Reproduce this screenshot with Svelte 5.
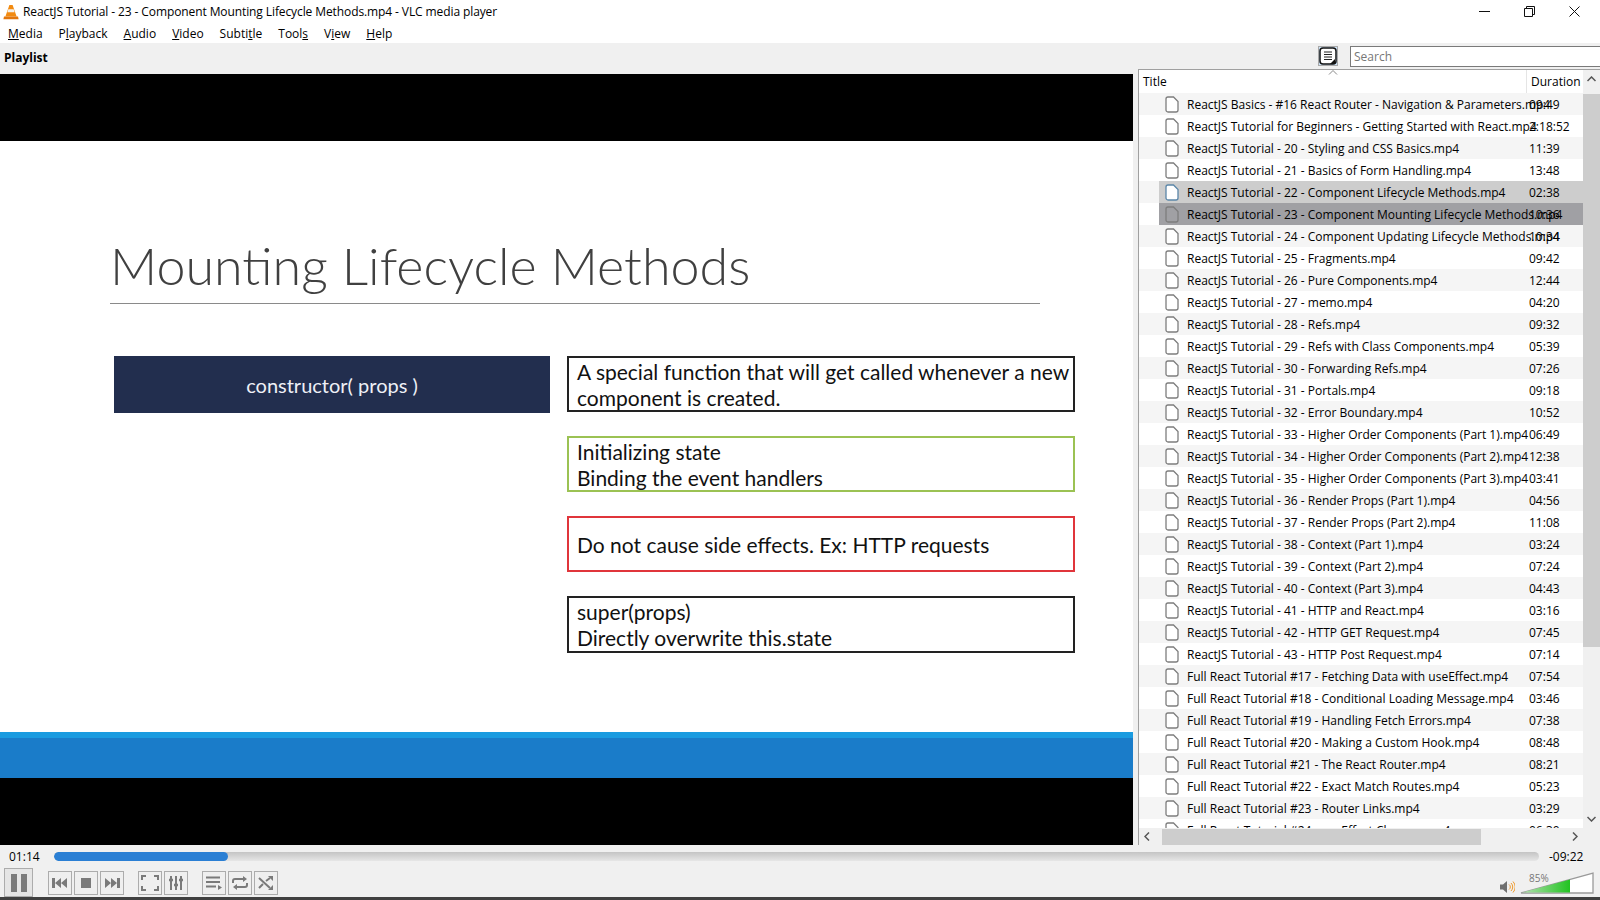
<script>
  const tracks = [
    ["ReactJS Basics - #16 React Router - Navigation & Parameters.mp4", "09:49"],
    ["ReactJS Tutorial for Beginners - Getting Started with React.mp4", "2:18:52"],
    ["ReactJS Tutorial - 20 - Styling and CSS Basics.mp4", "11:39"],
    ["ReactJS Tutorial - 21 - Basics of Form Handling.mp4", "13:48"],
    ["ReactJS Tutorial - 22 - Component Lifecycle Methods.mp4", "02:38"],
    ["ReactJS Tutorial - 23 - Component Mounting Lifecycle Methods.mp4", "10:36"],
    ["ReactJS Tutorial - 24 - Component Updating Lifecycle Methods.mp4", "10:34"],
    ["ReactJS Tutorial - 25 - Fragments.mp4", "09:42"],
    ["ReactJS Tutorial - 26 - Pure Components.mp4", "12:44"],
    ["ReactJS Tutorial - 27 - memo.mp4", "04:20"],
    ["ReactJS Tutorial - 28 - Refs.mp4", "09:32"],
    ["ReactJS Tutorial - 29 - Refs with Class Components.mp4", "05:39"],
    ["ReactJS Tutorial - 30 - Forwarding Refs.mp4", "07:26"],
    ["ReactJS Tutorial - 31 - Portals.mp4", "09:18"],
    ["ReactJS Tutorial - 32 - Error Boundary.mp4", "10:52"],
    ["ReactJS Tutorial - 33 - Higher Order Components (Part 1).mp4", "06:49"],
    ["ReactJS Tutorial - 34 - Higher Order Components (Part 2).mp4", "12:38"],
    ["ReactJS Tutorial - 35 - Higher Order Components (Part 3).mp4", "03:41"],
    ["ReactJS Tutorial - 36 - Render Props (Part 1).mp4", "04:56"],
    ["ReactJS Tutorial - 37 - Render Props (Part 2).mp4", "11:08"],
    ["ReactJS Tutorial - 38 - Context (Part 1).mp4", "03:24"],
    ["ReactJS Tutorial - 39 - Context (Part 2).mp4", "07:24"],
    ["ReactJS Tutorial - 40 - Context (Part 3).mp4", "04:43"],
    ["ReactJS Tutorial - 41 - HTTP and React.mp4", "03:16"],
    ["ReactJS Tutorial - 42 - HTTP GET Request.mp4", "07:45"],
    ["ReactJS Tutorial - 43 - HTTP Post Request.mp4", "07:14"],
    ["Full React Tutorial #17 - Fetching Data with useEffect.mp4", "07:54"],
    ["Full React Tutorial #18 - Conditional Loading Message.mp4", "03:46"],
    ["Full React Tutorial #19 - Handling Fetch Errors.mp4", "07:38"],
    ["Full React Tutorial #20 - Making a Custom Hook.mp4", "08:48"],
    ["Full React Tutorial #21 - The React Router.mp4", "08:21"],
    ["Full React Tutorial #22 - Exact Match Routes.mp4", "05:23"],
    ["Full React Tutorial #23 - Router Links.mp4", "03:29"],
    ["Full React Tutorial #24 - useEffect Cleanup.mp4", "06:30"]
  ];
  const menu = [
    ["", "M", "edia"], ["P", "l", "ayback"], ["", "A", "udio"], ["", "V", "ideo"],
    ["Subti", "t", "le"], ["Tool", "s", ""], ["V", "i", "ew"], ["", "H", "elp"]
  ];
</script>

<div class="window">
  <header class="titlebar">
    <svg class="cone" width="16" height="16" viewBox="0 0 16 16">
      <path d="M6.4 1h3.2l4 11.5H2.4z" fill="#f28a10"/>
      <path d="M5.3 5.2h5.4l.9 3H4.4z" fill="#f4f0ea"/>
      <path d="M1 12.5h14l.6 2.8H.4z" fill="#e2760c"/>
    </svg>
    <span class="wintitle">ReactJS Tutorial - 23 - Component Mounting Lifecycle Methods.mp4 - VLC media player</span>
    <div class="winbtns">
      <svg width="11" height="11" viewBox="0 0 11 11"><path d="M0 5.5h11" stroke="#111" fill="none"/></svg>
      <svg width="11" height="11" viewBox="0 0 11 11"><path d="M.5 2.5h8v8h-8zM2.5 2.5v-2h8v8h-2" stroke="#111" fill="none"/></svg>
      <svg width="11" height="11" viewBox="0 0 11 11"><path d="M.5.5l10 10M10.5.5l-10 10" stroke="#111" fill="none"/></svg>
    </div>
  </header>

  <nav class="menubar">
    {#each menu as [a, u, b]}
      <span>{a}<u>{u}</u>{b}</span>
    {/each}
  </nav>

  <main class="body">
    <section class="left">
      <div class="plabel">Playlist</div>
      <div class="video">
        <div class="slide">
          <h1>Mounting Lifecycle Methods</h1>
          <div class="rule"></div>
          <div class="boxes">
            <div class="navy">constructor( props )</div>
            <div class="stack">
              <div class="box black">A special function that will get called whenever a new<br>component is created.</div>
              <div class="box green">Initializing state<br>Binding the event handlers</div>
              <div class="box red">Do not cause side effects. Ex: HTTP requests</div>
              <div class="box black last">super(props)<br>Directly overwrite this.state</div>
            </div>
          </div>
        </div>
        <div class="stripe"></div>
      </div>
    </section>

    <section class="right">
      <div class="ptools">
        <div class="toggle">
          <svg width="18" height="18" viewBox="0 0 18 18">
            <rect x="1" y="1" width="16" height="16" rx="3" fill="#fff" stroke="#111" stroke-width="1.5"/>
            <path d="M5 5h8M5 7.5h8M5 10h8M5 12.5h8" stroke="#222"/>
            <path d="M11 17l5-5v5z" fill="#111"/>
          </svg>
        </div>
        <div class="search">Search</div>
      </div>
      <div class="panel">
        <div class="listwrap">
          <div class="thead">
            <span class="th-title">Title</span>
            <span class="th-dur">Duration</span>
            <svg class="sort" width="10" height="5" viewBox="0 0 10 5"><path d="M1 4.500l4-4 4 4" stroke="#888" fill="none"/></svg>
          </div>
          <div class="rows">
            {#each tracks as [name, dur], i}
              <div class="row" class:alt={i % 2 === 0}>
                <div class="cell" class:hover={i === 4} class:sel={i === 5}>
                  <svg class="file" width="14" height="17" viewBox="0 0 14 17">
                    <path d="M1 3a2 2 0 0 1 2-2h5.500L13 5.500V14a2 2 0 0 1-2 2H3a2 2 0 0 1-2-2z" fill={i === 5 ? "none" : "#fff"} stroke={i === 4 ? "#5b86a8" : "#7d7d7d"} stroke-width="1.300"/>
                  </svg>
                  <span class="name">{name}</span>
                  <span class="dur">{dur}</span>
                </div>
              </div>
            {/each}
          </div>
        </div>
        <div class="vscroll">
          <svg width="9" height="6" viewBox="0 0 9 6"><path d="M.5 5L4.500 1l4 4" stroke="#555" stroke-width="1.500" fill="none"/></svg>
          <div class="vtrack"><div class="vthumb"></div></div>
          <svg width="9" height="6" viewBox="0 0 9 6"><path d="M.5 1l4 4 4-4" stroke="#555" stroke-width="1.500" fill="none"/></svg>
        </div>
        <div class="hscroll">
          <svg width="6" height="9" viewBox="0 0 6 9"><path d="M5 .5l-4 4 4 4" stroke="#555" stroke-width="1.500" fill="none"/></svg>
          <div class="htrack"><div class="hthumb"></div></div>
          <svg width="6" height="9" viewBox="0 0 6 9"><path d="M1 .5l4 4-4 4" stroke="#555" stroke-width="1.500" fill="none"/></svg>
        </div>
      </div>
    </section>
  </main>

  <footer class="controls">
    <div class="seekrow">
      <span class="time">01:14</span>
      <div class="seek"><div class="played" style="width: 11.7%"></div></div>
      <span class="time">-09:22</span>
    </div>
    <div class="btnrow">
      <div class="btn big">
        <svg width="18" height="20" viewBox="0 0 18 20"><path d="M1 1h6v18H1zM11 1h6v18h-6z" fill="#7a7a7a"/></svg>
      </div>
      <div class="group first">
        <div class="btn"><svg width="16" height="12" viewBox="0 0 16 12"><path d="M0 1h3v10H0zM3 6l6-5v10zM9 6l6-5v10z" fill="#7a7a7a"/></svg></div>
        <div class="btn"><svg width="12" height="12" viewBox="0 0 12 12"><path d="M1 1h10v10H1z" fill="#7a7a7a"/></svg></div>
        <div class="btn"><svg width="16" height="12" viewBox="0 0 16 12"><path d="M1 1l6 5-6 5zM7 1l6 5-6 5zM13 1h3v10h-3z" fill="#7a7a7a"/></svg></div>
      </div>
      <div class="group">
        <div class="btn"><svg width="18" height="16" viewBox="0 0 18 16"><path d="M1 5V1h4M13 1h4v4M17 11v4h-4M5 15H1v-4" stroke="#7a7a7a" stroke-width="2" fill="none"/></svg></div>
        <div class="btn"><svg width="16" height="16" viewBox="0 0 16 16"><path d="M3 1v14M8 1v14M13 1v14" stroke="#7a7a7a" stroke-width="2"/><path d="M1 5h4M6 10h4M11 5h4" stroke="#7a7a7a" stroke-width="2.500"/></svg></div>
      </div>
      <div class="group">
        <div class="btn"><svg width="16" height="14" viewBox="0 0 16 14"><path d="M0 1.500h14M0 6h14M0 10.500h10" stroke="#7a7a7a" stroke-width="2"/><path d="M12 9l4 2.500-4 2.500z" fill="#7a7a7a"/></svg></div>
        <div class="btn"><svg width="16" height="14" viewBox="0 0 16 14"><path d="M1 7V5a2 2 0 0 1 2-2h10M15 7v2a2 2 0 0 1-2 2H3" stroke="#7a7a7a" stroke-width="2" fill="none"/><path d="M11 0l4 3-4 3zM5 8l-4 3 4 3z" fill="#7a7a7a"/></svg></div>
        <div class="btn"><svg width="16" height="14" viewBox="0 0 16 14"><path d="M1 2l11 10M1 12l4-4M8 5l4-3" stroke="#7a7a7a" stroke-width="2" fill="none"/><path d="M10 0h5v5zM10 14h5V9z" fill="#7a7a7a"/></svg></div>
      </div>
      <div class="volume">
        <svg class="speaker" width="15" height="14" viewBox="0 0 15 14">
          <path d="M0 4.500h3L7 1v12L3 9.500H0z" fill="#6f6f6f"/>
          <path d="M9 4.500a3 3 0 0 1 0 5M11 3a5.500 5.500 0 0 1 0 8M13 1.500a8 8 0 0 1 0 11" stroke="#ef9a2d" fill="none"/>
        </svg>
        <div class="vol">
          <svg width="74" height="22" viewBox="0 0 74 22">
            <defs>
              <linearGradient id="volgrad" x1="0" x2="1" y1="0" y2="0">
                <stop offset="0" stop-color="#b4e0b0"/>
                <stop offset="1" stop-color="#21c321"/>
              </linearGradient>
            </defs>
            <path d="M1 21L73 1v20z" fill="#fff" stroke="#9a9a9a" stroke-width="1.300"/>
            <path d="M2 20.500L50 7.500v13z" fill="url(#volgrad)"/>
          </svg>
          <span class="pct">85%</span>
        </div>
      </div>
    </div>
  </footer>
</div>

<style>
  :global(body) {
    margin: 0;
    background: #f0f0f0;
  }

  .window {
    width: 1600px;
    height: 900px;
    display: flex;
    flex-direction: column;
    overflow: hidden;
    font-family: "Open Sans", "Noto Sans", sans-serif;
    font-size: 12px;
    color: #000;
    border-bottom: 3px solid #404040;
    box-sizing: border-box;
  }

  .titlebar {
    height: 23px;
    background: #fff;
    display: flex;
    align-items: center;
    padding-left: 3px;
    flex: none;
  }
  .wintitle {
    margin-left: 4px;
    letter-spacing: -0.1px;
  }
  .winbtns {
    margin-left: auto;
    display: flex;
    gap: 34px;
    padding-right: 20px;
  }

  .menubar {
    height: 20px;
    background: #fff;
    display: flex;
    gap: 16px;
    padding-left: 8px;
    align-items: center;
    flex: none;
  }

  .body {
    flex: none;
    height: 802px;
    display: flex;
  }

  .left {
    width: 1133px;
    margin-right: 5px;
    display: flex;
    flex-direction: column;
  }
  .plabel {
    height: 31px;
    line-height: 30px;
    padding-left: 4px;
    font-weight: 700;
    flex: none;
  }
  .video {
    height: 771px;
    background: #000;
    padding-top: 67px;
    box-sizing: border-box;
  }
  .slide {
    height: 591px;
    background: #fff;
    padding: 94px 0 0 110px;
    box-sizing: border-box;
    font-family: Lato, "Open Sans", sans-serif;
  }
  h1 {
    margin: 0;
    font-size: 52px;
    line-height: 60px;
    font-weight: 300;
    color: #404040;
  }
  .rule {
    width: 930px;
    height: 1px;
    background: #8a8a8a;
    margin-top: 8px;
  }
  .boxes {
    display: flex;
    gap: 17px;
    margin: 52px 0 0 4px;
    align-items: flex-start;
  }
  .navy {
    width: 436px;
    height: 57px;
    background: #222e4e;
    color: #eef0f6;
    font-size: 20px;
    display: flex;
    align-items: center;
    justify-content: center;
  }
  .stack {
    width: 508px;
    display: flex;
    flex-direction: column;
    gap: 24px;
  }
  .box {
    height: 56px;
    border: 2px solid #222;
    box-sizing: border-box;
    font-size: 21px;
    line-height: 25.500px;
    padding-left: 8px;
    display: flex;
    align-items: center;
    color: #111;
  }
  .box.green { border-color: #9bc253; }
  .box.red { border-color: #e0353b; }
  .box.last { height: 57px; }
  .stack .box { display: block; padding-top: 1px; }
  .box.red { line-height: 52px; }

  .stripe {
    height: 46px;
    background: linear-gradient(#1a9be0 0 6px, #1a7cc9 6px);
  }

  .right {
    width: 462px;
    display: flex;
    flex-direction: column;
  }
  .ptools {
    height: 26px;
    display: flex;
    align-items: center;
    flex: none;
  }
  .toggle {
    margin-left: 180px;
    width: 20px;
    height: 20px;
    border: 1px solid #a8a8a8;
    box-sizing: border-box;
    background: #cfe4f8;
    display: flex;
    align-items: center;
    justify-content: center;
  }
  .search {
    margin-left: 12px;
    flex: 1;
    height: 19px;
    border: 1px solid #7a7a7a;
    border-right: none;
    background: #fff;
    color: #777;
    padding-left: 3px;
    line-height: 19px;
  }

  .panel {
    flex: 1;
    min-height: 0;
    display: grid;
    grid-template-columns: 1fr 17px;
    grid-template-rows: 1fr 17px;
    border-left: 1px solid #a0a0a0;
    border-top: 1px solid #a0a0a0;
  }
  .listwrap {
    overflow: hidden;
    background: #fff;
    min-height: 0;
  }
  .thead {
    height: 23px;
    display: flex;
    align-items: center;
    position: relative;
    background: #fff;
  }
  .th-title {
    padding-left: 4px;
    flex: 1;
  }
  .th-dur {
    width: 57px;
    padding-left: 4px;
    box-sizing: border-box;
    border-left: 1px solid #e5e5e5;
    line-height: 23px;
  }
  .sort {
    position: absolute;
    left: 189px;
    top: 0;
  }
  .row {
    height: 22px;
    background: #fff;
  }
  .row.alt {
    background: #f5f5f5;
  }
  .cell {
    margin-left: 20px;
    height: 22px;
    display: flex;
    align-items: center;
    padding-left: 6px;
  }
  .cell.hover {
    background: #cdcdcd;
  }
  .cell.sel {
    background: #a0a0a4;
  }
  .name {
    margin-left: 8px;
    width: 342px;
    white-space: nowrap;
  }
  .dur {
    margin-left: 0;
  }

  .vscroll {
    background: #f0f0f0;
    display: flex;
    flex-direction: column;
    align-items: center;
    padding: 6px 0;
    box-sizing: border-box;
    min-height: 0;
  }
  .vtrack {
    flex: 1;
    width: 100%;
    padding-top: 12px;
    box-sizing: border-box;
  }
  .vthumb {
    height: 553px;
    background: #cdcdcd;
  }
  .hscroll {
    grid-column: 1 / span 2;
    background: #f0f0f0;
    display: flex;
    align-items: center;
    padding: 0 22px 0 5px;
  }
  .htrack {
    flex: 1;
    padding: 0 0 0 12px;
  }
  .hthumb {
    width: 319px;
    height: 16px;
    background: #cdcdcd;
  }

  .controls {
    flex: 1;
    display: flex;
    flex-direction: column;
    padding: 0 6px 0 4px;
  }
  .seekrow {
    display: flex;
    align-items: center;
    height: 23px;
    padding-left: 5px;
    flex: none;
  }
  .time {
    font-size: 12px;
    width: 45px;
  }
  .seek {
    flex: 1;
    height: 9px;
    border-radius: 5px;
    background: linear-gradient(#c4c4c4, #e6e6e6);
    margin-right: 10px;
    overflow: hidden;
  }
  .played {
    height: 100%;
    background: #2a7fd4;
    border-radius: 5px;
  }
  .btnrow {
    display: flex;
    align-items: center;
    flex: 1;
  }
  .btn {
    width: 24px;
    height: 24px;
    border: 1px solid #acacac;
    box-sizing: border-box;
    background: #efefef;
    display: flex;
    align-items: center;
    justify-content: center;
  }
  .btn.big {
    width: 29px;
    height: 29px;
    background: #e5e5e5;
  }
  .group {
    display: flex;
    gap: 2px;
    margin-left: 14px;
  }
  .group.first {
    margin-left: 15px;
  }
  .volume {
    margin-left: auto;
    display: flex;
    align-items: flex-end;
    gap: 5px;
  }
  .vol {
    position: relative;
    height: 22px;
  }
  .pct {
    position: absolute;
    left: 9px;
    top: -1px;
    font-size: 10px;
    color: #777;
  }
</style>
